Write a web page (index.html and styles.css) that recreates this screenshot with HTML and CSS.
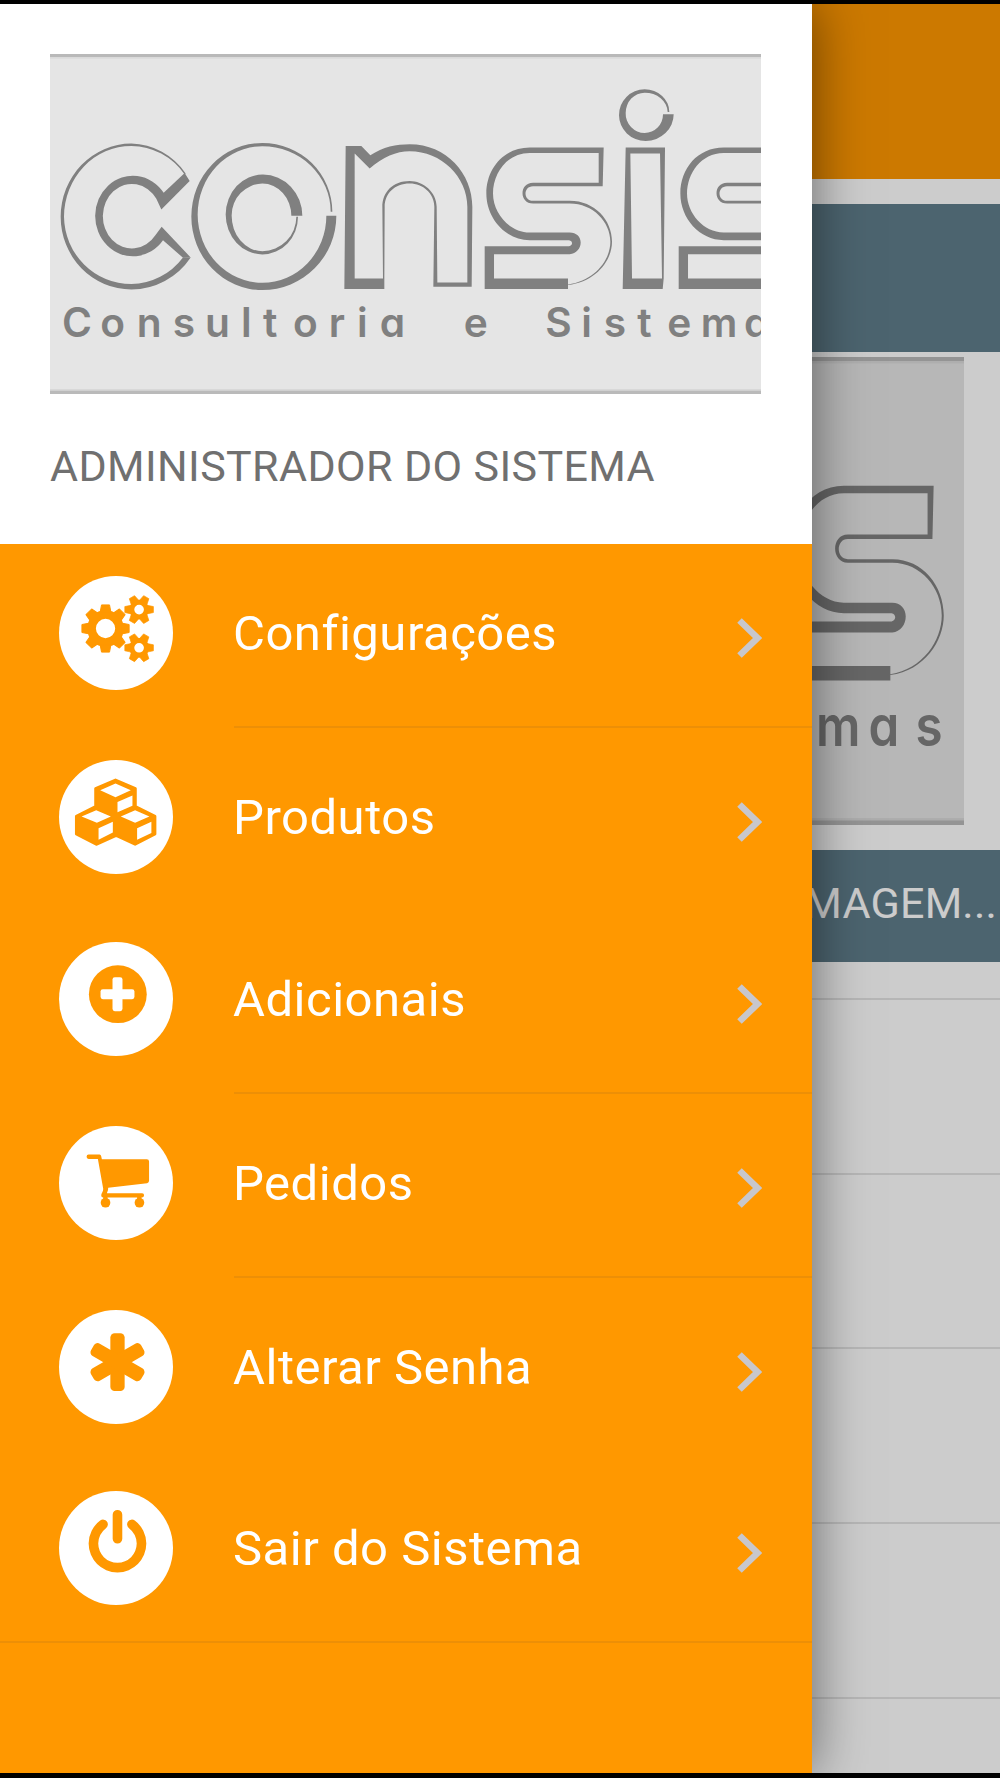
FILE: index.html
```html
<!DOCTYPE html>
<html lang="pt-BR">
<head>
<meta charset="utf-8">
<title>Consis</title>
<link rel="stylesheet" href="styles.css">
</head>
<body>
<svg class="defs" aria-hidden="true">
  <defs>
    <path id="logo-s" d="M612 322H390C312 322 260 385 260 460C260 535 318 600 390 600H508C520 602 520 616 508 618H255V747H505V735C590 725 637 660 637 605C637 540 585 482 510 482H400C370 482 370 438 400 438H609ZM597 338H390C322 338 280 400 280 460C280 520 330 577 390 577H510C530 577 543 590 543 607C543 625 530 640 510 642H283V715H505V733C585 722 632 660 632 605C632 545 580 490 510 490H400C358 490 358 428 400 428H597Z"/>
    <symbol id="logo" viewBox="31 41 2318 1021" preserveAspectRatio="none">
      <rect x="31" y="41" width="2318" height="1021" fill="#e5e5e5"/>
      <rect x="31" y="41" width="2318" height="9" fill="#b9b9b9"/>
      <rect x="31" y="50" width="2318" height="5" fill="#dadada"/>
      <rect x="31" y="1047" width="2318" height="5" fill="#d8d8d8"/>
      <rect x="31" y="1052" width="2318" height="10" fill="#bababa"/>
      <g fill="#808080" fill-rule="evenodd">
        <path d="M438 400A205 214 0 0 0 275 310A212 220 0 0 0 63 530A212 218 0 0 0 275 748A215 220 0 0 0 453 652H430A200 205 0 0 1 275 732A202 205 0 0 1 73 530A202 213 0 0 1 275 317A200 210 0 0 1 435 403Z"/>
        <path d="M435 398L450 422L365 508L350 476A87 97 0 1 0 347 585L366 560L453 652L430 653L370 600A113 121 0 1 1 372 458Z"/>
        <path d="M878 515A210 207 0 0 0 668 308A213 221 0 0 0 455 529A213 221 0 0 0 668 750A222 223 0 0 0 890 527H860A192 201 0 0 1 668 728A194 205 0 0 1 474 523A194 205 0 0 1 668 318A205 197 0 0 1 873 515Z"/>
        <path d="M788 527A118 124 0 0 0 670 403A111 120 0 0 0 558 523A111 120 0 0 0 668 643A107 113 0 0 0 775 530H770A102 103 0 0 1 668 633A92 106 0 0 1 576 525A94 95 0 0 1 668 430A87 97 0 0 1 755 527Z"/>
        <path d="M918 317H965L992 345C1030 320 1070 312 1110 312C1220 312 1298 400 1298 500L1296 740H1181L1184 500C1184 460 1150 430 1110 430C1065 430 1035 460 1035 500L1034 715V747H914ZM945 340L990 385C1030 350 1070 333 1110 333C1205 333 1283 410 1283 500V727H1193L1191 500C1191 455 1150 422 1110 422C1060 422 1028 455 1028 500L1030 715H945Z"/>
        <use href="#logo-s" x="1080"/>
        <path d="M1758 322H1876L1872 715L1869 747H1749ZM1772 340H1861L1867 715H1777Z"/>
        <path d="M1889 215A74 68 0 0 0 1815 147A77 77 0 0 0 1738 225A80 77 0 0 0 1818 302A84 80 0 0 0 1902 222H1870A55 56 0 0 1 1815 278A57 58 0 0 1 1758 218A57 61 0 0 1 1815 157A69 60 0 0 1 1884 215Z"/>
        <use href="#logo-s" x="1662"/>
      </g>
      <text class="tagline" y="890" x="67 182 291 399 496 604 670 760 867 952 1020 1100 1272 1400 1517 1625 1692 1793 1883 1983 2113 2229">Consultoria e Sistemas</text>
    </symbol>
    <path id="gear-l" d="M-12 -71H12L16 -50H-16Z"/>
    <path id="gear-s" d="M-9 -43H9L13 -24H-13Z"/>
    <g id="small-gear">
      <circle r="22" fill="none" stroke="#ff9800" stroke-width="15"/>
      <g fill="#ff9800" stroke="#ff9800" stroke-width="2" stroke-linejoin="round">
        <use href="#gear-s" transform="rotate(30)"/><use href="#gear-s" transform="rotate(90)"/><use href="#gear-s" transform="rotate(150)"/><use href="#gear-s" transform="rotate(210)"/><use href="#gear-s" transform="rotate(270)"/><use href="#gear-s" transform="rotate(330)"/>
      </g>
    </g>
  </defs>
</svg>

<div class="screen">
  <main class="page">
    <div class="toolbar"></div>
    <div class="banner"></div>
    <svg class="photo"><use href="#logo" width="100%" height="100%"/></svg>
    <div class="caption">IMAGEM...</div>
    <div class="lines"><i></i><i></i><i></i><i></i><i></i></div>
  </main>
  <div class="backdrop"></div>

  <aside class="drawer">
    <header class="profile">
      <div class="brand"><svg class="brand-logo"><use href="#logo" width="100%" height="100%"/></svg></div>
      <div class="user">ADMINISTRADOR DO SISTEMA</div>
    </header>
    <nav class="menu">
      <a class="item">
        <svg class="icon" viewBox="0 0 343 343">
          <g transform="translate(140 158)">
            <circle r="42" fill="none" stroke="#ff9800" stroke-width="26"/>
            <g fill="#ff9800" stroke="#ff9800" stroke-width="3" stroke-linejoin="round">
              <use href="#gear-l"/><use href="#gear-l" transform="rotate(45)"/><use href="#gear-l" transform="rotate(90)"/><use href="#gear-l" transform="rotate(135)"/><use href="#gear-l" transform="rotate(180)"/><use href="#gear-l" transform="rotate(225)"/><use href="#gear-l" transform="rotate(270)"/><use href="#gear-l" transform="rotate(315)"/>
            </g>
          </g>
          <use href="#small-gear" x="241" y="101"/>
          <use href="#small-gear" x="241" y="216"/>
        </svg>
        <span class="row line"><span class="label">Configurações</span>
        <svg class="chevron" viewBox="0 0 25 40"><path d="M2.500 2.500L20.500 20L2.500 37.500"/></svg></span>
      </a>
      <a class="item">
        <svg class="icon" viewBox="0 0 343 343">
          <path fill="#ff9800" stroke="#ff9800" stroke-width="8" stroke-linejoin="round" d="M170 60L230 86V140L289 169V223L229 254L172 227L112 254L52 223V169L110 140V86Z"/>
          <path fill="#fff" d="M124 91L170 71L216 91L170 112ZM176 126L221 107V138L176 157ZM68 170L112 151L156 170L114 189ZM119 205L162 186V218L119 240ZM186 170L229 151L272 170L229 189ZM235 205L278 186V220L235 240Z"/>
        </svg>
        <span class="row"><span class="label">Produtos</span>
        <svg class="chevron" viewBox="0 0 25 40"><path d="M2.500 2.500L20.500 20L2.500 37.500"/></svg></span>
      </a>
      <a class="item">
        <svg class="icon" viewBox="0 0 343 343">
          <circle cx="177" cy="157" r="87" fill="#ff9800"/>
          <g fill="#fff"><rect x="125" y="142" width="102" height="30" rx="7"/><rect x="161" y="106" width="30" height="102" rx="7"/></g>
        </svg>
        <span class="row line"><span class="label">Adicionais</span>
        <svg class="chevron" viewBox="0 0 25 40"><path d="M2.500 2.500L20.500 20L2.500 37.500"/></svg></span>
      </a>
      <a class="item">
        <svg class="icon" viewBox="0 0 343 343">
          <g fill="#ff9800">
            <path d="M89 86H122Q126 86 127 91L129 100H264Q271 100 271 107V165Q271 171 265 172L148 186Q149 192 144 202H250Q256 202 256 208.500T250 215H133Q127 215 127 208C127 203 134 196 133 189L117 99H89Q83 99 83 92.500T89 86Z"/>
            <circle cx="140" cy="231" r="14.500"/><circle cx="242" cy="231" r="14.500"/>
            <rect x="133" y="210" width="13" height="12"/><rect x="235" y="210" width="13" height="12"/>
          </g>
        </svg>
        <span class="row line"><span class="label">Pedidos</span>
        <svg class="chevron" viewBox="0 0 25 40"><path d="M2.500 2.500L20.500 20L2.500 37.500"/></svg></span>
      </a>
      <a class="item">
        <svg class="icon" viewBox="0 0 343 343">
          <g fill="#ff9800" transform="translate(176 157)">
            <rect x="-21.500" y="-87" width="43" height="174" rx="13"/>
            <rect x="-21.500" y="-87" width="43" height="174" rx="13" transform="rotate(60)"/>
            <rect x="-21.500" y="-87" width="43" height="174" rx="13" transform="rotate(120)"/>
          </g>
        </svg>
        <span class="row"><span class="label">Alterar Senha</span>
        <svg class="chevron" viewBox="0 0 25 40"><path d="M2.500 2.500L20.500 20L2.500 37.500"/></svg></span>
      </a>
      <a class="item">
        <svg class="icon" viewBox="0 0 343 343">
          <path fill="#ff9800" transform="translate(74.700 57) scale(.113)" d="M1664 896q0 156-61 298t-164 245-245 164-298 61-298-61-245-164-164-245-61-298q0-182 80.500-343t226.500-270q43-32 95.500-25t83.500 50q32 42 24.500 94.500t-49.500 84.500q-98 74-151.500 181t-53.500 228q0 104 40.500 198.500t109.500 163.500 163.500 109.500 198.500 40.500 198.500-40.500 163.500-109.500 109.500-163.500 40.500-198.500q0-121-53.500-228t-151.500-181q-42-32-49.500-84.500t24.500-94.500q31-43 84-50t95 25q146 109 226.500 270t80.500 343zm-640-768v640q0 52-38 90t-90 38-90-38-38-90v-640q0-52 38-90t90-38 90 38 38 90z"/>
        </svg>
        <span class="row"><span class="label">Sair do Sistema</span>
        <svg class="chevron" viewBox="0 0 25 40"><path d="M2.500 2.500L20.500 20L2.500 37.500"/></svg></span>
      </a>
    </nav>
  </aside>
</div>
</body>
</html>
```
FILE: styles.css
```css
* { box-sizing: border-box; }

body {
  margin: 0;
  width: 1000px;
  height: 1778px;
  padding: 4px 0 5px;
  background: #000;
  font-family: Roboto, "Noto Sans", sans-serif;
}

.defs {
  position: absolute;
  width: 0;
  height: 0;
}

.screen {
  position: relative;
  height: 1769px;
  overflow: hidden;
  background: #fff;
}

/* Page under the drawer */
.page {
  display: flex;
  flex-direction: column;
}

.toolbar {
  height: 175px;
  background: #ff9800;
}

.banner {
  height: 148px;
  margin-top: 25px;
  background: #607d8b;
}

.photo {
  display: block;
  width: 938px;
  height: 468px;
  margin: 5px 0 25px 26px;
}

.caption {
  height: 112px;
  padding-right: 3px;
  background: #607d8b;
  color: #fff;
  font-size: 43px;
  line-height: 107px;
  letter-spacing: .2px;
  text-align: right;
}

.lines {
  display: flex;
  flex-direction: column;
  padding-top: 36px;
  gap: 172.700px;
}

.lines i {
  height: 2px;
  background: #e4e4e4;
}

.backdrop {
  position: absolute;
  inset: 0;
  background: rgba(0, 0, 0, .2);
}

/* Drawer */
.drawer {
  position: absolute;
  inset: 0 auto 0 0;
  width: 811.500px;
  background: #ff9800;
  box-shadow: 0 0 52px rgba(0, 0, 0, .5);
}

.profile {
  height: 540px;
  padding: 50px 50px 0;
  background: #fff;
}

.brand {
  width: 711px;
  height: 340px;
  overflow: hidden;
}

.brand-logo {
  display: block;
  width: 772.700px;
  height: 340px;
}

.tagline {
  fill: #808080;
  font-family: Inter, sans-serif;
  font-size: 122px;
  font-weight: 600;
  font-feature-settings: "cv11";
}

.user {
  margin-top: 47px;
  color: #707070;
  font-size: 43px;
  line-height: 50px;
  letter-spacing: .38px;
  white-space: nowrap;
}

.menu {
  border-bottom: 2px solid #ed8f06;
}

.item {
  display: flex;
  padding-left: 59px;
}

.icon {
  flex: none;
  width: 114px;
  height: 114px;
  margin: 32px 61px 0 0;
  border-radius: 50%;
  background: #fff;
}

.row {
  display: flex;
  flex: 1;
  height: 181.500px;
  padding-right: 50px;
}

.line {
  height: 184px;
  border-bottom: 2px solid #ed8f06;
}

.label {
  flex: 1;
  margin-left: -1px;
  color: #fff;
  font-size: 49px;
  line-height: 180px;
  letter-spacing: .5px;
}

.chevron {
  flex: none;
  width: 25px;
  height: 40px;
  margin-top: 74px;
}

.chevron path {
  fill: none;
  stroke: #c8c7cc;
  stroke-width: 6.500;
}
```
